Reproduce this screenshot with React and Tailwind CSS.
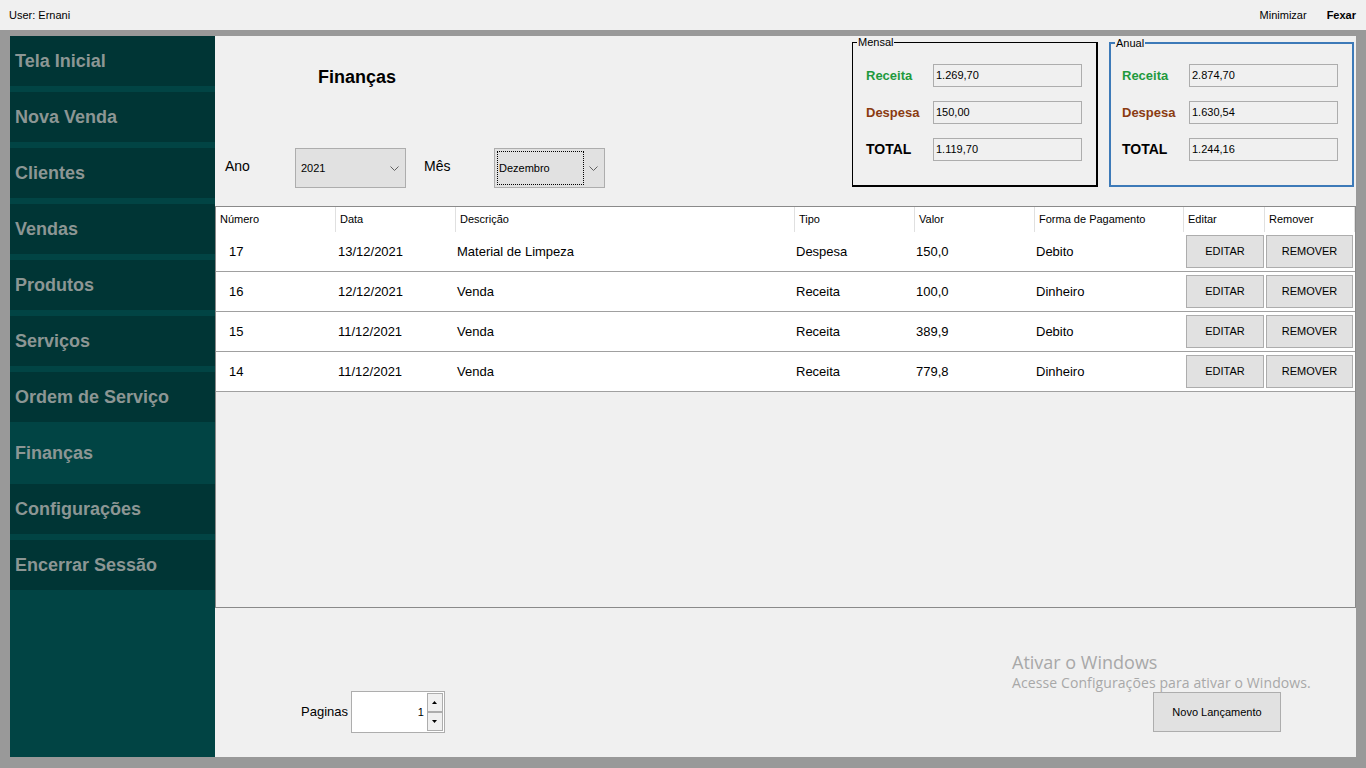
import React from 'react';

const menu = [
  'Tela Inicial',
  'Nova Venda',
  'Clientes',
  'Vendas',
  'Produtos',
  'Serviços',
  'Ordem de Serviço',
  'Finanças',
  'Configurações',
  'Encerrar Sessão',
];

const cols = [
  { label: 'Número', w: 'w-[120px]' },
  { label: 'Data', w: 'w-[120px]' },
  { label: 'Descrição', w: 'w-[339px]' },
  { label: 'Tipo', w: 'w-[120px]' },
  { label: 'Valor', w: 'w-[120px]' },
  { label: 'Forma de Pagamento', w: 'w-[149px]' },
  { label: 'Editar', w: 'w-[81px]' },
  { label: 'Remover', w: 'w-[90px]' },
];

const rows = [
  ['17', '13/12/2021', 'Material de Limpeza', 'Despesa', '150,0', 'Debito'],
  ['16', '12/12/2021', 'Venda', 'Receita', '100,0', 'Dinheiro'],
  ['15', '11/12/2021', 'Venda', 'Receita', '389,9', 'Debito'],
  ['14', '11/12/2021', 'Venda', 'Receita', '779,8', 'Dinheiro'],
];

function Chevron() {
  return (
    <svg width="9" height="5" viewBox="0 0 9 5" className="shrink-0">
      <polyline points="0.5,0.5 4.5,4.5 8.5,0.5" fill="none" stroke="#606060" strokeWidth="1" />
    </svg>
  );
}

function Combo({ value, focused }) {
  return (
    <div className="w-[111px] h-[40px] bg-[#e1e1e1] border border-[#adadad] flex items-center p-[2px]">
      <div
        className={
          focused
            ? 'flex-1 h-full flex items-center pl-[1px] border border-dotted border-black text-[11px]'
            : 'flex-1 h-full flex items-center pl-[3px] text-[11px]'
        }
      >
        {value}
      </div>
      <div className="w-[18px] flex justify-center">
        <Chevron />
      </div>
    </div>
  );
}

function Resumo({ title, receita, despesa, total, blue }) {
  return (
    <div
      className={
        blue
          ? 'relative w-[245px] h-[145px] border-2 border-[#3d7ab8]'
          : 'relative w-[246px] h-[145px] border border-r-2 border-b-2 border-black'
      }
    >
      <span className="absolute -top-[7px] left-[4px] bg-[#f0f0f0] px-[1px] text-[11px] leading-[13px]">{title}</span>
      <div className={blue ? 'flex flex-col gap-[14px] pt-[20px] pl-[11px]' : 'flex flex-col gap-[14px] pt-[21px] pl-[13px]'}>
        <div className="flex items-center">
          <span className="w-[67px] text-[13px] font-bold text-[#1f9a3e]">Receita</span>
          <div className="w-[149px] h-[23px] border border-[#adadad] flex items-center pl-[2px] text-[11px]">{receita}</div>
        </div>
        <div className="flex items-center">
          <span className="w-[67px] text-[13px] font-bold text-[#8a3b12]">Despesa</span>
          <div className="w-[149px] h-[23px] border border-[#adadad] flex items-center pl-[2px] text-[11px]">{despesa}</div>
        </div>
        <div className="flex items-center">
          <span className="w-[67px] text-[14px] font-bold">TOTAL</span>
          <div className="w-[149px] h-[23px] border border-[#adadad] flex items-center pl-[2px] text-[11px]">{total}</div>
        </div>
      </div>
    </div>
  );
}

export default function App() {
  return (
    <div className="relative w-[1366px] h-[768px] flex flex-col bg-[#f0f0f0] text-black overflow-hidden font-['Liberation_Sans',Arial,sans-serif]">
      <header className="h-[30px] shrink-0 flex items-center justify-between pl-[9px] pr-[10px] text-[11px]">
        <span>User: Ernani</span>
        <div className="flex gap-[20px]">
          <span>Minimizar</span>
          <span className="font-bold">Fexar</span>
        </div>
      </header>

      <div className="flex-1 flex bg-[#999999] pt-[6px] pb-[11px] pl-[10px] pr-[10px]">
        <nav className="w-[205px] shrink-0 bg-[#014444] flex flex-col gap-[6px]">
          {menu.map((item) => (
            <div
              key={item}
              className={
                item === 'Finanças'
                  ? 'h-[50px] flex items-center pl-[5px] bg-[#014444] text-[18px] font-bold text-[#8c9694]'
                  : 'h-[50px] flex items-center pl-[5px] bg-[#003535] text-[18px] font-bold text-[#8c9694]'
              }
            >
              {item}
            </div>
          ))}
        </nav>

        <main className="flex-1 flex flex-col bg-[#f0f0f0]">
          <div className="h-[170px] shrink-0 flex">
            <div className="flex-1 flex flex-col">
              <h1 className="pt-[30px] pl-[103px] text-[18px] leading-[22px] font-bold">Finanças</h1>
              <div className="mt-[60px] flex items-center pl-[10px]">
                <span className="w-[70px] text-[14px] mb-[4px]">Ano</span>
                <Combo value="2021" />
                <span className="ml-[18px] w-[70px] text-[14px] mb-[4px]">Mês</span>
                <Combo value="Dezembro" focused />
              </div>
            </div>
            <div className="flex gap-[11px] pt-[6px] pr-[2px]">
              <Resumo title="Mensal" receita="1.269,70" despesa="150,00" total="1.119,70" />
              <Resumo title="Anual" receita="2.874,70" despesa="1.630,54" total="1.244,16" blue />
            </div>
          </div>

          <div className="h-[402px] shrink-0 border border-[#8a8a8a] bg-[#f0f0f0] flex flex-col">
            <div className="h-[25px] flex bg-white text-[11px]">
              {cols.map((c) => (
                <div key={c.label} className={`${c.w} h-full flex items-center pl-[4px] border-r border-[#e0e0e0]`}>
                  {c.label}
                </div>
              ))}
            </div>
            {rows.map((r) => (
              <div key={r[0]} className="h-[40px] flex bg-white border-b border-[#a0a0a0] text-[13px]">
                <div className="w-[120px] flex items-center pl-[13px]">{r[0]}</div>
                <div className="w-[120px] flex items-center pl-[2px]">{r[1]}</div>
                <div className="w-[339px] flex items-center pl-[1px]">{r[2]}</div>
                <div className="w-[120px] flex items-center pl-[1px]">{r[3]}</div>
                <div className="w-[120px] flex items-center pl-[1px]">{r[4]}</div>
                <div className="w-[149px] flex items-center pl-[1px]">{r[5]}</div>
                <div className="w-[81px] flex items-center pl-[2px]">
                  <button className="w-[78px] h-[33px] bg-[#e1e1e1] border border-[#adadad] text-[11px]">EDITAR</button>
                </div>
                <div className="w-[90px] flex items-center pl-[1px]">
                  <button className="w-[87px] h-[33px] bg-[#e1e1e1] border border-[#adadad] text-[11px]">REMOVER</button>
                </div>
              </div>
            ))}
          </div>

          <div className="flex-1 flex items-end pb-[24px] pl-[86px] pr-[75px]">
            <div className="flex items-center">
              <span className="text-[13px] mr-[3px]">Paginas</span>
              <div className="w-[94px] h-[42px] bg-white border border-[#adadad] flex items-center justify-end">
                <span className="text-[11px] mr-[3px]">1</span>
                <div className="w-[16px] h-[38px] flex flex-col mr-[1px]">
                  <div className="flex-1 bg-[#f0f0f0] border border-[#adadad] flex items-center justify-center">
                    <svg width="5" height="3" viewBox="0 0 5 3"><polygon points="2.5,0 5,3 0,3" fill="#000" /></svg>
                  </div>
                  <div className="flex-1 bg-[#f0f0f0] border border-[#adadad] flex items-center justify-center">
                    <svg width="5" height="3" viewBox="0 0 5 3"><polygon points="0,0 5,0 2.5,3" fill="#000" /></svg>
                  </div>
                </div>
              </div>
            </div>
            <button className="ml-auto mb-[1px] w-[128px] h-[40px] bg-[#e1e1e1] border border-[#adadad] text-[11px]">
              Novo Lançamento
            </button>
          </div>
        </main>
      </div>

      <div className="absolute left-[1012px] top-[651px] text-[#a8a8a8] font-['Open_Sans',sans-serif] pointer-events-none">
        <div className="text-[18px] leading-[22px]">Ativar o Windows</div>
        <div className="text-[14px] leading-[20px] tracking-[0.1px]">Acesse Configurações para ativar o Windows.</div>
      </div>
    </div>
  );
}
